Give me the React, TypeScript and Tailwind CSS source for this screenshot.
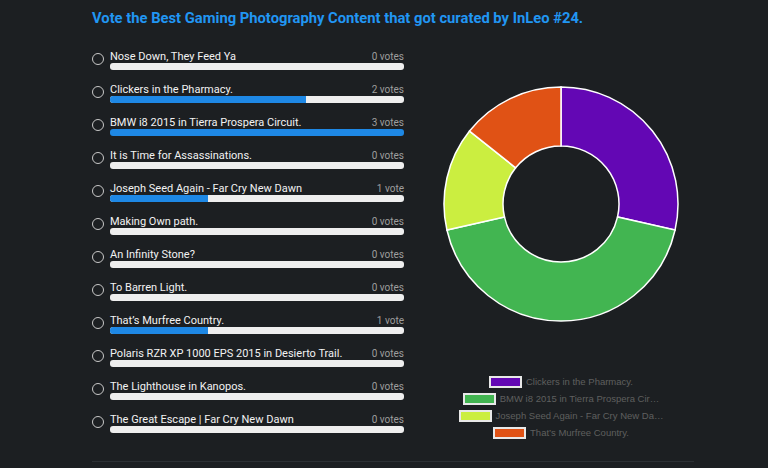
import React from 'react';

const options = [
  { label: 'Nose Down, They Feed Ya', votes: 0 },
  { label: 'Clickers in the Pharmacy.', votes: 2 },
  { label: 'BMW i8 2015 in Tierra Prospera Circuit.', votes: 3 },
  { label: 'It is Time for Assassinations.', votes: 0 },
  { label: 'Joseph Seed Again - Far Cry New Dawn', votes: 1 },
  { label: 'Making Own path.', votes: 0 },
  { label: 'An Infinity Stone?', votes: 0 },
  { label: 'To Barren Light.', votes: 0 },
  { label: 'That’s Murfree Country.', votes: 1 },
  { label: 'Polaris RZR XP 1000 EPS 2015 in Desierto Trail.', votes: 0 },
  { label: 'The Lighthouse in Kanopos.', votes: 0 },
  { label: 'The Great Escape | Far Cry New Dawn', votes: 0 },
];

const slices = [
  { label: 'Clickers in the Pharmacy.', votes: 2, color: '#6307b4' },
  { label: 'BMW i8 2015 in Tierra Prospera Cir…', votes: 3, color: '#42b551' },
  { label: 'Joseph Seed Again - Far Cry New Da…', votes: 1, color: '#cbee40' },
  { label: 'That’s Murfree Country.', votes: 1, color: '#e05215' },
];

const maxVotes = Math.max(...options.map((o) => o.votes));

function arcPath(cx: number, cy: number, r0: number, r1: number, a0: number, a1: number) {
  const p = (r: number, a: number) => {
    const rad = ((a - 90) * Math.PI) / 180;
    return `${(cx + r * Math.cos(rad)).toFixed(2)} ${(cy + r * Math.sin(rad)).toFixed(2)}`;
  };
  const large = a1 - a0 > 180 ? 1 : 0;
  return `M ${p(r1, a0)} A ${r1} ${r1} 0 ${large} 1 ${p(r1, a1)} L ${p(r0, a1)} A ${r0} ${r0} 0 ${large} 0 ${p(r0, a0)} Z`;
}

const Donut = () => {
  const total = slices.reduce((s, x) => s + x.votes, 0);
  let angle = 0;
  return (
    <svg width="240" height="240" viewBox="0 0 240 240">
      {slices.map((s) => {
        const a0 = angle;
        const a1 = angle + (s.votes / total) * 360;
        angle = a1;
        return (
          <path
            key={s.label}
            d={arcPath(120, 120, 58, 117, a0, a1)}
            fill={s.color}
            stroke="#ffffff"
            strokeWidth="1.5"
          />
        );
      })}
    </svg>
  );
};

export default function App() {
  return (
    <div className="min-h-[468px] w-[768px] bg-[#1c1f22] font-['Roboto',sans-serif]">
      <div className="ml-[92px] w-[602px] pt-[9px]">
        <h1 className="text-[14.75px] leading-[18px] font-bold text-[#2196f3]">
          Vote the Best Gaming Photography Content that got curated by InLeo #24.
        </h1>

        <div className="mt-[23px] flex">
          {/* Options */}
          <div className="w-[312px]">
            {options.map((o) => {
              const pct = maxVotes ? (o.votes / maxVotes) * 100 : 0;
              return (
                <div key={o.label} className="flex h-[33px] items-start">
                  <div className="mt-[-1px] flex h-[20px] w-[18px] shrink-0 items-center">
                    <div className="h-[12px] w-[12px] rounded-full border-[1.5px] border-[#c8c8c8]" />
                  </div>
                  <div className="flex-1">
                    <div className="flex h-[13px] items-baseline justify-between">
                      <span className="text-[11px] leading-[13px] text-[#f2f2f2]">{o.label}</span>
                      <span className="text-[10px] leading-[13px] text-[#9e9e9e]">
                        {o.votes} {o.votes === 1 ? 'vote' : 'votes'}
                      </span>
                    </div>
                    <div className="h-[7px] overflow-hidden rounded-[3px] bg-[#eeeeee]">
                      <div className="h-full bg-[#1e88e5]" style={{ width: `${pct}%` }} />
                    </div>
                  </div>
                </div>
              );
            })}
          </div>

          {/* Chart */}
          <div className="ml-[24px] flex flex-1 flex-col items-center pt-[34px]">
            <Donut />
            <div className="mt-[52px] flex flex-col items-center gap-[5px] font-['Liberation_Sans',Arial,sans-serif]">
              {slices.map((s) => (
                <div key={s.label} className="flex h-[12px] items-center gap-[4px]">
                  <div
                    className="h-[12px] w-[33px] border-2 border-[#e8e8e8]"
                    style={{ backgroundColor: s.color }}
                  />
                  <span className="text-[9.5px] leading-[12px] text-[#5f5f5f]">{s.label}</span>
                </div>
              ))}
            </div>
          </div>
        </div>

        <div className="mt-[15px] h-px bg-[#2c3034]" />
      </div>
    </div>
  );
}
